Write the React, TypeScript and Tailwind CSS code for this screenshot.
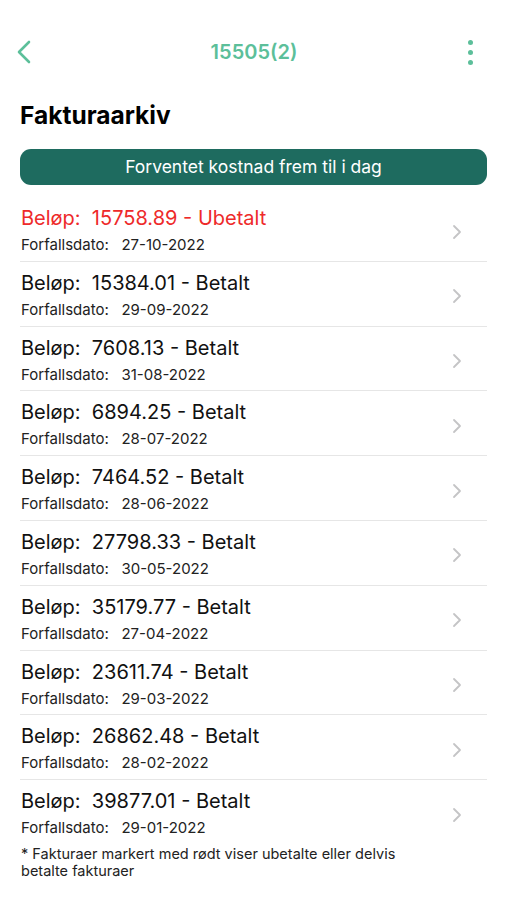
import React from 'react';

interface Invoice {
  amount: string;
  status: 'Betalt' | 'Ubetalt';
  dueDate: string;
}

const invoices: Invoice[] = [
  { amount: '15758.89', status: 'Ubetalt', dueDate: '27-10-2022' },
  { amount: '15384.01', status: 'Betalt', dueDate: '29-09-2022' },
  { amount: '7608.13', status: 'Betalt', dueDate: '31-08-2022' },
  { amount: '6894.25', status: 'Betalt', dueDate: '28-07-2022' },
  { amount: '7464.52', status: 'Betalt', dueDate: '28-06-2022' },
  { amount: '27798.33', status: 'Betalt', dueDate: '30-05-2022' },
  { amount: '35179.77', status: 'Betalt', dueDate: '27-04-2022' },
  { amount: '23611.74', status: 'Betalt', dueDate: '29-03-2022' },
  { amount: '26862.48', status: 'Betalt', dueDate: '28-02-2022' },
  { amount: '39877.01', status: 'Betalt', dueDate: '29-01-2022' },
];

const App: React.FC = () => {
  return (
    <div className="w-[507px] min-h-[900px] bg-white font-['Inter','Liberation_Sans',sans-serif] text-[#111]">
      {/* header */}
      <div className="flex items-center justify-between h-[40px] mt-[32px] pl-[16px] pr-[34px]">
        <svg width="16" height="24" viewBox="0 0 16 24" fill="none">
          <path d="M13 2 L3 12 L13 22" stroke="#5cbf9a" strokeWidth="2.6" strokeLinecap="round" strokeLinejoin="round" />
        </svg>
        <div className="text-[20px] font-semibold text-[#5cbf9a] pl-[8px]">15505(2)</div>
        <div className="flex flex-col gap-[5px] items-center">
          <span className="w-[5px] h-[5px] rounded-full bg-[#5cbf9a]" />
          <span className="w-[5px] h-[5px] rounded-full bg-[#5cbf9a]" />
          <span className="w-[5px] h-[5px] rounded-full bg-[#5cbf9a]" />
        </div>
      </div>

      <div className="px-[20px]">
        <h1 className="mt-[27px] text-[24.5px] leading-[32px] font-bold text-black">Fakturaarkiv</h1>

        <button className="mt-[18px] w-full h-[36px] rounded-[11px] bg-[#1e6b5f] text-white text-[17.5px]">
          Forventet kostnad frem til i dag
        </button>

        <div className="mt-[12px]">
          {invoices.map((inv, i) => (
            <div
              key={inv.dueDate}
              className={`flex items-center justify-between pt-[9px] pb-[7.8px] ${i < invoices.length - 1 ? 'border-b border-[#e6e6e6]' : ''}`}
            >
              <div className="pl-[1px]">
                <div className={`text-[20px] leading-[24px] whitespace-pre ${inv.status === 'Ubetalt' ? 'text-[#ee2a2a]' : 'text-[#111]'}`}>
                  {`Beløp:  ${inv.amount} - ${inv.status}`}
                </div>
                <div className="mt-[7px] text-[15px] leading-[16px] whitespace-pre text-[#222]">
                  {`Forfallsdato:   ${inv.dueDate}`}
                </div>
              </div>
              <svg width="10" height="16" viewBox="0 0 10 16" fill="none" className="mr-[25px] mt-[4px]">
                <path d="M2 2 L8 8 L2 14" stroke="#c4c4c6" strokeWidth="1.8" strokeLinecap="round" strokeLinejoin="round" />
              </svg>
            </div>
          ))}
        </div>

        <p className="mt-[1px] text-[14.5px] leading-[17px] text-[#222] pl-[1px]">
          * Fakturaer markert med rødt viser ubetalte eller delvis
          <br />
          betalte fakturaer
        </p>
      </div>
    </div>
  );
};

export default App;
